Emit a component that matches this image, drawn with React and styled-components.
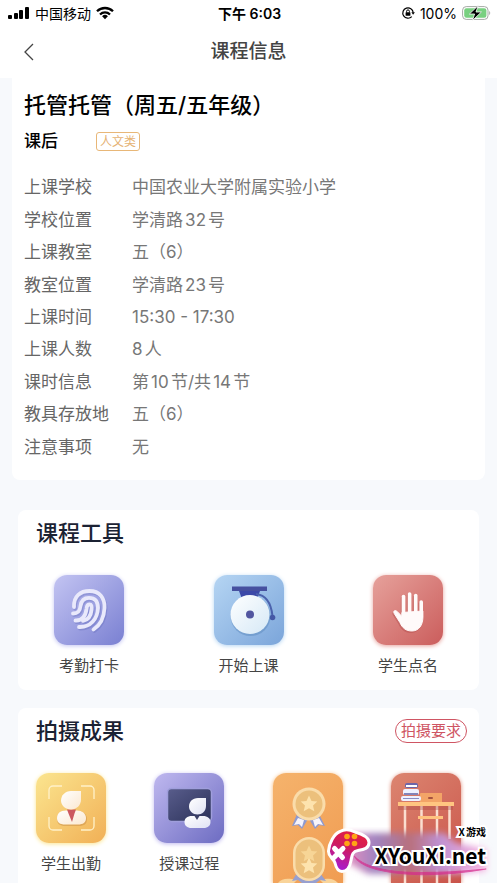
import React from "react";
import styled, { createGlobalStyle } from "styled-components";

const lessonInfo = [
  { label: "上课学校", value: "中国农业大学附属实验小学" },
  { label: "学校位置", value: "学清路32号" },
  { label: "上课教室", value: "五（6）" },
  { label: "教室位置", value: "学清路23号" },
  { label: "上课时间", value: "15:30 - 17:30" },
  { label: "上课人数", value: "8人" },
  { label: "课时信息", value: "第10节/共14节" },
  { label: "教具存放地", value: "五（6）" },
  { label: "注意事项", value: "无" },
];

const SignalIcon = () => (
  <svg width="22" height="14" viewBox="0 0 22 14" aria-hidden="true">
    <rect x="0" y="9" width="4" height="4" rx="1" />
    <rect x="6" y="7" width="4" height="6" rx="1" />
    <rect x="11" y="4" width="4" height="9" rx="1" />
    <rect x="17" y="1" width="4" height="12" rx="1" />
  </svg>
);

const WifiIcon = () => (
  <svg width="18" height="14" viewBox="0 0 18 14" aria-hidden="true">
    <g fill="none" stroke="#000" strokeWidth="2.3">
      <path d="M1 5.3a11.4 11.4 0 0 1 16 0" />
      <path d="M4 8.5a7.1 7.1 0 0 1 10 0" />
    </g>
    <path d="M9 13.2 6.1 10.3a4.1 4.1 0 0 1 5.8 0z" />
  </svg>
);

const LockIcon = () => (
  <svg width="14" height="14" viewBox="0 0 14 14" aria-hidden="true">
    <path
      d="M10.8 10.6A5.2 5.2 0 1 1 12.2 6.6"
      fill="none"
      stroke="#000"
      strokeWidth="1.2"
    />
    <path d="M10.4 6.3h3.5l-1.8 2.5z" />
    <rect x="4.6" y="6.2" width="4.8" height="3.6" rx="0.6" />
    <path d="M5.6 6.5V5.3a1.4 1.4 0 0 1 2.8 0v1.2" fill="none" stroke="#000" />
  </svg>
);

const BatteryIcon = () => (
  <svg width="29" height="16" viewBox="0 0 29 16" aria-hidden="true">
    <rect
      x="0.6"
      y="1.6"
      width="25.4"
      height="12.8"
      rx="3.6"
      fill="#fff"
      stroke="#a5aaa5"
    />
    <rect x="2.2" y="3.2" width="22.2" height="9.6" rx="2.2" fill="#78d080" />
    <path d="M27.3 6v4c1.2-.5 1.2-3.5 0-4z" fill="#999" />
    <path
      d="M16.2 0.6 7.400 9h5.200l-2.200 6.600 9-8.600h-5.400z"
      stroke="#fff"
      strokeWidth="0.8"
    />
  </svg>
);

const BackIcon = () => (
  <svg width="10" height="18" viewBox="0 0 10 18" aria-hidden="true">
    <path d="M9 1 1 9l8 8" fill="none" stroke="#444" strokeWidth="1.3" />
  </svg>
);

const Gradient = ({ id, from, to }) => (
  <linearGradient id={id} x1="0" y1="0" x2="1" y2="1">
    <stop offset="0" stopColor={from} />
    <stop offset="1" stopColor={to} />
  </linearGradient>
);

const FingerprintArt = () => (
  <svg viewBox="0 0 70 70" aria-hidden="true">
    {["#5a62b4", "#e9e9fb"].map((color, i) => (
      <g
        key={color}
        fill="none"
        stroke={color}
        strokeOpacity={i ? 1 : 0.3}
        strokeWidth="3.8"
        strokeLinecap="round"
        transform={i ? undefined : "translate(1 1.5)"}
      >
        <path d="M20 32C19.500 21 26.500 16 35.500 16C45.500 16 51 23 50.500 33C50 43 46.500 50 39.500 54.500" />
        <path d="M19 38.500C24.500 38.500 26 35.500 26.500 31C27.200 25.500 30 22.800 35 22.800C41 22.800 44 26.500 44 33C43.500 44 36.500 52.500 25 52" />
        <path d="M21.500 45.500C28 45.800 31.500 41.500 32.500 34C32.800 30.800 33.500 29.500 35.200 29.500C37.600 29.500 38 31 37.600 34.500C37 41 33.500 45 29 45.800" />
      </g>
    ))}
  </svg>
);

const BellArt = () => (
  <svg viewBox="0 0 70 70" aria-hidden="true">
    <defs>
      <Gradient id="bellDisc" from="#ffffff" to="#d5e8f6" />
    </defs>
    <path d="M18 11.500h35v4.500H18z" fill="#46509f" />
    <path d="M25 16h21l-3 8H28z" fill="#3c49a8" />
    <path
      d="M42 19c10 1 15 8 16.500 22"
      fill="none"
      stroke="#4b62ad"
      strokeWidth="2"
    />
    <circle cx="58.500" cy="42.500" r="2.800" fill="#4558a6" />
    <circle cx="36.500" cy="41" r="20" fill="#4878b0" opacity="0.35" />
    <circle cx="36" cy="39.500" r="19.500" fill="url(#bellDisc)" />
    <circle cx="36" cy="39.500" r="4" fill="#5256a0" />
  </svg>
);

const HandShape = ({ fill, opacity, transform }) => (
  <g fill={fill} stroke={fill} opacity={opacity} transform={transform}>
    <g fill="none" strokeWidth="3.6" strokeLinecap="round">
      <path d="M30.500 40V21.500" />
      <path d="M36.600 38V19" />
      <path d="M42.700 39V20.500" />
      <path d="M48.200 42V27" />
    </g>
    <path d="M28.900 37.500 49.900 36v6c0 8-4 14-11 14-6 0-9.600-3-12-8.500l-5.800-9.200c-1.200-2.300 1-3.600 2.700-2.100l5 5z" />
  </g>
);

const HandArt = () => (
  <svg viewBox="0 0 70 70" aria-hidden="true">
    <HandShape fill="#9a3030" opacity={0.25} transform="translate(-1 1.500)" />
    <HandShape fill="#fffafa" />
  </svg>
);

const AttendanceArt = () => (
  <svg viewBox="0 0 70 70" aria-hidden="true">
    <defs>
      <Gradient id="personYellow" from="#ffffff" to="#fbe8d0" />
    </defs>
    <path
      d="M13 26v-9a4 4 0 0 1 4-4h9M45 13h9a4 4 0 0 1 4 4v9M58 44v9a4 4 0 0 1-4 4h-9M26 57h-9a4 4 0 0 1-4-4v-9"
      fill="none"
      stroke="#fff1c9"
      strokeWidth="1.300"
    />
    <path
      d="M30 38c-6 0-9 3-9 8s3 7 8 7h14c5 0 8-2 8-7s-4-8-10-8z"
      fill="#b8783a"
      opacity="0.350"
    />
    <path
      d="M30 37.500c-6 0-9 3-9 7.500s3 6.500 8 6.500h13c5 0 8-2 8-6.500s-4-7.500-9-7.500z"
      fill="url(#personYellow)"
    />
    <path d="M31 36.500h9l-1.500 4L36 49l-3.500-8.500z" fill="#cc5960" />
    <path
      d="M45 18v9c0 5-4.500 9.500-10 9.500s-10-4-10-9 4-9.500 10-9.500z"
      fill="url(#personYellow)"
    />
  </svg>
);

const LectureArt = () => (
  <svg viewBox="0 0 70 70" aria-hidden="true">
    <defs>
      <Gradient id="board" from="#595d8c" to="#2b3159" />
      <Gradient id="personBlue" from="#ffffff" to="#dfe2f4" />
    </defs>
    <rect
      x="13.500"
      y="15.500"
      width="44"
      height="33"
      rx="4"
      fill="url(#board)"
      stroke="#9f9edb"
      strokeWidth="1.500"
    />
    <path
      d="M38 43c-5 0-7.500 2.500-7.500 6s2.500 6 7 6h12c4.500 0 7-2.500 7-6s-3-6-7.500-6z"
      fill="url(#personBlue)"
    />
    <path d="M40.500 43h5L43 47z" fill="#3c4168" />
    <path
      d="M52 25v8c0 5-4 8.500-8.500 8.500S35 38 35 33.500s3.500-8.500 9-8.500z"
      fill="url(#personBlue)"
    />
  </svg>
);

const STAR =
  "M0-8.500 2.500-3 8.300-2.500 4 1.500 5.300 7.300 0 4.300-5.300 7.300-4 1.500-8.300-2.500-2.500-3z";

const MedalArt = () => (
  <svg viewBox="0 0 70 110" aria-hidden="true">
    <g>
      <path d="m24 41-5 12 6-1 4 4 6-10z" fill="#8f9ad0" />
      <path d="m46 41 6 12-6-1-4 4-6-10z" fill="#8f9ad0" />
      <path d="m25 45-4 7 5-1 3 3 2-7zM46 45l4 7-5-1-3 3-2-7z" fill="#f7f4fa" />
      <circle cx="36" cy="31" r="16.500" fill="#fadcaa" />
      <circle cx="36" cy="31" r="13.500" fill="#ecc07c" />
      <path d={STAR} transform="translate(36 31)" fill="#fde3ae" />
    </g>
    <path d="M5 110c4-5 10-5 19-3l-3 3zM47 107c9-2 13-2 18 3H50z" fill="#f9d49a" />
    <path d="m24 100-5 8 6-1 4 3h14l4-3 6 1-6-8z" fill="#98a0cf" />
    <rect x="20" y="64" width="32" height="44" rx="16" fill="#fadcaa" />
    <rect x="22.500" y="66.500" width="27" height="39" rx="13.500" fill="#ecc07c" />
    <path d={STAR} transform="translate(36 81)" fill="#f7d596" />
    <path d={STAR} transform="translate(36 93)" fill="#fde3ae" />
  </svg>
);

const DeskArt = () => (
  <svg viewBox="0 0 70 110" aria-hidden="true">
    <path
      d="M14 33v33M30.500 33v33M46 33v33M58.500 33v33M14 90v20M30.500 90v20M46 90v20M58.500 90v20"
      stroke="#fbdfd0"
      strokeWidth="2.500"
    />
    <path d="M7 33h55v4H7z" fill="#aa4742" opacity="0.350" />
    <path d="M29 21q0-1 1-1h21v9H29z" fill="#f3a467" />
    <rect x="37" y="24" width="5" height="2" rx="1" fill="#a65240" />
    <rect x="7" y="29" width="56" height="4" fill="#ffc580" />
    <rect x="27" y="43" width="25" height="3" fill="#ffc27f" />
    <rect x="14" y="10" width="13" height="5" rx="2" fill="#6d66a8" />
    <rect x="15" y="12" width="11" height="2" fill="#fff" />
    <rect x="12" y="16" width="16" height="6" rx="2" fill="#eff1ff" />
    <rect x="13" y="20" width="14" height="2" fill="#8484ba" />
    <rect x="10" y="23" width="20" height="5" rx="2" fill="#eff1ff" />
    <rect x="12" y="25" width="16" height="1" fill="#8a8cc2" />
  </svg>
);

const GamepadArt = () => (
  <svg width="45" height="48" viewBox="0 0 45 48" aria-hidden="true">
    <defs>
      <linearGradient id="pad" x1="0.700" y1="0" x2="0.300" y2="1">
        <stop offset="0" stopColor="#e5203f" />
        <stop offset="0.450" stopColor="#cf1b5e" />
        <stop offset="1" stopColor="#a51bd8" />
      </linearGradient>
    </defs>
    <path
      d="M2.500 24C3 16 8 7 14 4.500c5-3 10-2 15 .500C36 7 43 10 43 15.500c0 6-5 7-11 8-6 1-6 5-7 10-1 6-4 11-9 11-4 0-6-4-7-8.500C7.500 31 2 30 2.500 24z"
      fill="url(#pad)"
      stroke="#fff"
      strokeWidth="3"
    />
    <g fill="#ffa414">
      <circle cx="21" cy="9.500" r="2.800" />
      <circle cx="28.500" cy="9.500" r="2.800" />
      <circle cx="21" cy="16.500" r="2.800" />
      <circle cx="28.500" cy="16.500" r="2.800" />
    </g>
    <path
      d="m8.500 21.500 8 9M17 21.500l-9 9"
      stroke="#fff"
      strokeWidth="5"
      strokeLinecap="round"
    />
  </svg>
);

const GlowArt = () => (
  <svg viewBox="0 0 160 56" preserveAspectRatio="none" aria-hidden="true">
    <defs>
      <filter id="soft" x="-20%" y="-20%" width="140%" height="150%">
        <feGaussianBlur stdDeviation="3" />
      </filter>
      <linearGradient id="glow" x1="0" y1="0" x2="1" y2="0">
        <stop offset="0" stopColor="#e58fc0" />
        <stop offset="0.200" stopColor="#9f83c0" />
        <stop offset="0.450" stopColor="#b9707c" />
        <stop offset="0.650" stopColor="#bd8fcf" />
        <stop offset="1" stopColor="#f9b4e2" />
      </linearGradient>
    </defs>
    <path
      d="M14 6h96l12 10 30 6v22l-30 3H34L14 36z"
      fill="url(#glow)"
      filter="url(#soft)"
    />
    <path
      d="M20 29c18 19 70 19 132 13-58 10-120 7-132-13z"
      fill="#d62a8c"
      stroke="#d62a8c"
      opacity="0.700"
    />
  </svg>
);

const tools = [
  { name: "考勤打卡", from: "#c3c4f2", to: "#7a80d2", art: <FingerprintArt /> },
  { name: "开始上课", from: "#b5d5f3", to: "#7ba5da", art: <BellArt /> },
  { name: "学生点名", from: "#e6a19b", to: "#cb5d5c", art: <HandArt /> },
];

const results = [
  { name: "学生出勤", from: "#fbe58f", to: "#f1b056", art: <AttendanceArt /> },
  { name: "授课过程", from: "#bfb8ef", to: "#6d6cc2", art: <LectureArt /> },
  { name: "学生作品", from: "#f5b36c", to: "#f09c52", art: <MedalArt />, tall: true },
  { name: "教室环境", from: "#dc8570", to: "#c95349", art: <DeskArt />, tall: true },
];

const IconEntry = ({ item }) => (
  <Entry type="button" aria-label={item.name}>
    <Tile $from={item.from} $to={item.to} $tall={item.tall}>
      {item.art}
    </Tile>
    {!item.tall && <EntryName>{item.name}</EntryName>}
  </Entry>
);

export default function App() {
  return (
    <>
      <GlobalStyle />
      <Page>
        <Header>
          <StatusBar>
            <StatusGroup>
              <SignalIcon />
              <span>中国移动</span>
              <WifiIcon />
            </StatusGroup>
            <Clock>下午 6:03</Clock>
            <StatusGroup $end>
              <LockIcon />
              <span>100%</span>
              <BatteryIcon />
            </StatusGroup>
          </StatusBar>
          <NavBar>
            <BackButton type="button" aria-label="返回">
              <BackIcon />
            </BackButton>
            <NavTitle>课程信息</NavTitle>
          </NavBar>
        </Header>

        <InfoCard>
          <LessonTitle>托管托管（周五/五年级）</LessonTitle>
          <LessonMeta>
            <LessonKind>课后</LessonKind>
            <Tag>人文类</Tag>
          </LessonMeta>
          <InfoList>
            {lessonInfo.map((info) => (
              <InfoRow key={info.label}>
                <dt>{info.label}</dt>
                <dd>{info.value}</dd>
              </InfoRow>
            ))}
          </InfoList>
        </InfoCard>

        <Sections>
          <SectionCard>
            <SectionHeader>
              <SectionTitle>课程工具</SectionTitle>
            </SectionHeader>
            <EntryRow $inset={36}>
              {tools.map((item) => (
                <IconEntry key={item.name} item={item} />
              ))}
            </EntryRow>
          </SectionCard>

          <SectionCard $last>
            <SectionHeader>
              <SectionTitle>拍摄成果</SectionTitle>
              <RequireButton type="button">拍摄要求</RequireButton>
            </SectionHeader>
            <EntryRow $inset={18}>
              {results.map((item) => (
                <IconEntry key={item.name} item={item} />
              ))}
            </EntryRow>
          </SectionCard>
        </Sections>

        <Watermark>
          <GlowArt />
          <GamepadArt />
          <WatermarkText>
            <small>X游戏</small>
            <strong>XYouXi.net</strong>
          </WatermarkText>
        </Watermark>
      </Page>
    </>
  );
}

const GlobalStyle = createGlobalStyle`
  * {
    box-sizing: border-box;
  }
  body {
    margin: 0;
    background: #f7f9fc;
    font-family: Inter, "Noto Sans CJK SC", sans-serif;
    text-autospace: normal;
  }
  button {
    font-family: inherit;
    cursor: pointer;
  }
  h1, h2, p, dl, dd {
    margin: 0;
  }
`;
const Page = styled.div`
  position: relative;
  display: flex;
  flex-direction: column;
  min-height: 100vh;
  overflow: hidden;
`;
const Header = styled.header`
  background: #fff;
`;
const StatusBar = styled.div`
  display: grid;
  grid-template-columns: 1fr auto 1fr;
  align-items: center;
  height: 26px;
  padding: 0 6px 0 8px;
  font-size: 14px;
  color: #000;
`;
const StatusGroup = styled.div`
  display: flex;
  align-items: center;
  justify-content: ${(props) => (props.$end ? "flex-end" : "flex-start")};
  gap: 5px;
`;
const Clock = styled.div`
  font-weight: 600;
`;
const NavBar = styled.div`
  display: grid;
  grid-template-columns: 1fr auto 1fr;
  align-items: center;
  height: 52px;
  padding: 0 24px;
`;
const BackButton = styled.button`
  display: flex;
  justify-self: start;
  padding: 0;
  border: none;
  background: none;
`;
const NavTitle = styled.h1`
  font-size: 19px;
  line-height: 28px;
  font-weight: 500;
  color: #444;
`;
const InfoCard = styled.section`
  margin: 0 12px;
  padding: 12px 12px 17px;
  border-radius: 0 0 8px 8px;
  background: #fff;
`;
const LessonTitle = styled.h2`
  font-size: 22px;
  line-height: 30px;
  font-weight: 500;
  color: #000;
`;
const LessonMeta = styled.div`
  display: flex;
  align-items: center;
  gap: 38px;
  margin: 9px 0 18px;
`;
const LessonKind = styled.p`
  font-size: 17px;
  line-height: 24px;
  font-weight: 500;
`;
const Tag = styled.span`
  padding: 0 3px;
  border: 1px solid #e8b778;
  border-radius: 3px;
  font-size: 12px;
  line-height: 17px;
  color: #e5b274;
`;
const InfoList = styled.dl`
  display: grid;
  min-height: 292px;
`;
const InfoRow = styled.div`
  display: grid;
  grid-template-columns: 108px 1fr;
  align-items: center;
  font-size: 17px;
  line-height: 24px;
  dt {
    color: #666;
  }
  dd {
    color: #777;
  }
`;
const Sections = styled.div`
  flex: 1;
  display: flex;
  flex-direction: column;
  gap: 18px;
  padding: 30px 18px 0;
`;
const SectionCard = styled.section`
  flex: ${(props) => (props.$last ? "1" : "none")};
  padding: 8px 0 ${(props) => (props.$last ? 0 : 14)}px;
  border-radius: ${(props) => (props.$last ? "8px 8px 0 0" : "8px")};
  background: #fff;
`;
const SectionHeader = styled.div`
  display: flex;
  align-items: center;
  justify-content: space-between;
  padding: 0 12px 0 18px;
`;
const SectionTitle = styled.h2`
  font-size: 22px;
  line-height: 30px;
  font-weight: 500;
  color: #1b2233;
`;
const RequireButton = styled.button`
  padding: 0 5px;
  border: 1px solid #cf5563;
  border-radius: 12px;
  background: #fff;
  font-size: 15px;
  line-height: 22px;
  color: #cf5563;
`;
const EntryRow = styled.div`
  display: flex;
  align-items: flex-start;
  justify-content: space-between;
  padding: 27px ${(props) => props.$inset}px 0;
`;
const Entry = styled.button`
  display: flex;
  flex-direction: column;
  align-items: center;
  gap: 11px;
  padding: 0;
  border: none;
  background: none;
`;
const Tile = styled.span`
  display: block;
  width: 70px;
  height: ${(props) => (props.$tall ? 110 : 70)}px;
  border-radius: ${(props) => (props.$tall ? "13px 13px 0 0" : "13px")};
  background: linear-gradient(
    135deg,
    ${(props) => props.$from},
    ${(props) => props.$to}
  );
  box-shadow: 0 1px 4px ${(props) => props.$from};
  svg {
    display: block;
    width: 100%;
  }
`;
const EntryName = styled.span`
  font-size: 15px;
  line-height: 20px;
  color: #444;
`;
const Watermark = styled.div`
  position: absolute;
  right: 11px;
  bottom: 8px;
  display: flex;
  align-items: flex-end;
  gap: 4px;
  & > svg {
    position: relative;
    flex: none;
  }
  & > svg:first-child {
    position: absolute;
    left: 8px;
    bottom: -8px;
    width: 100%;
    height: 56px;
  }
`;
const WatermarkText = styled.div`
  position: relative;
  display: flex;
  flex-direction: column;
  align-items: flex-end;
  padding-bottom: 4px;
  font-family: "Noto Sans CJK SC", sans-serif;
  color: #000;
  -webkit-text-stroke: 4px #fff;
  paint-order: stroke fill;
  small {
    font-size: 10px;
    line-height: 16px;
    font-weight: 700;
  }
  strong {
    font-size: 21px;
    line-height: 31px;
    font-weight: 700;
  }
`;
